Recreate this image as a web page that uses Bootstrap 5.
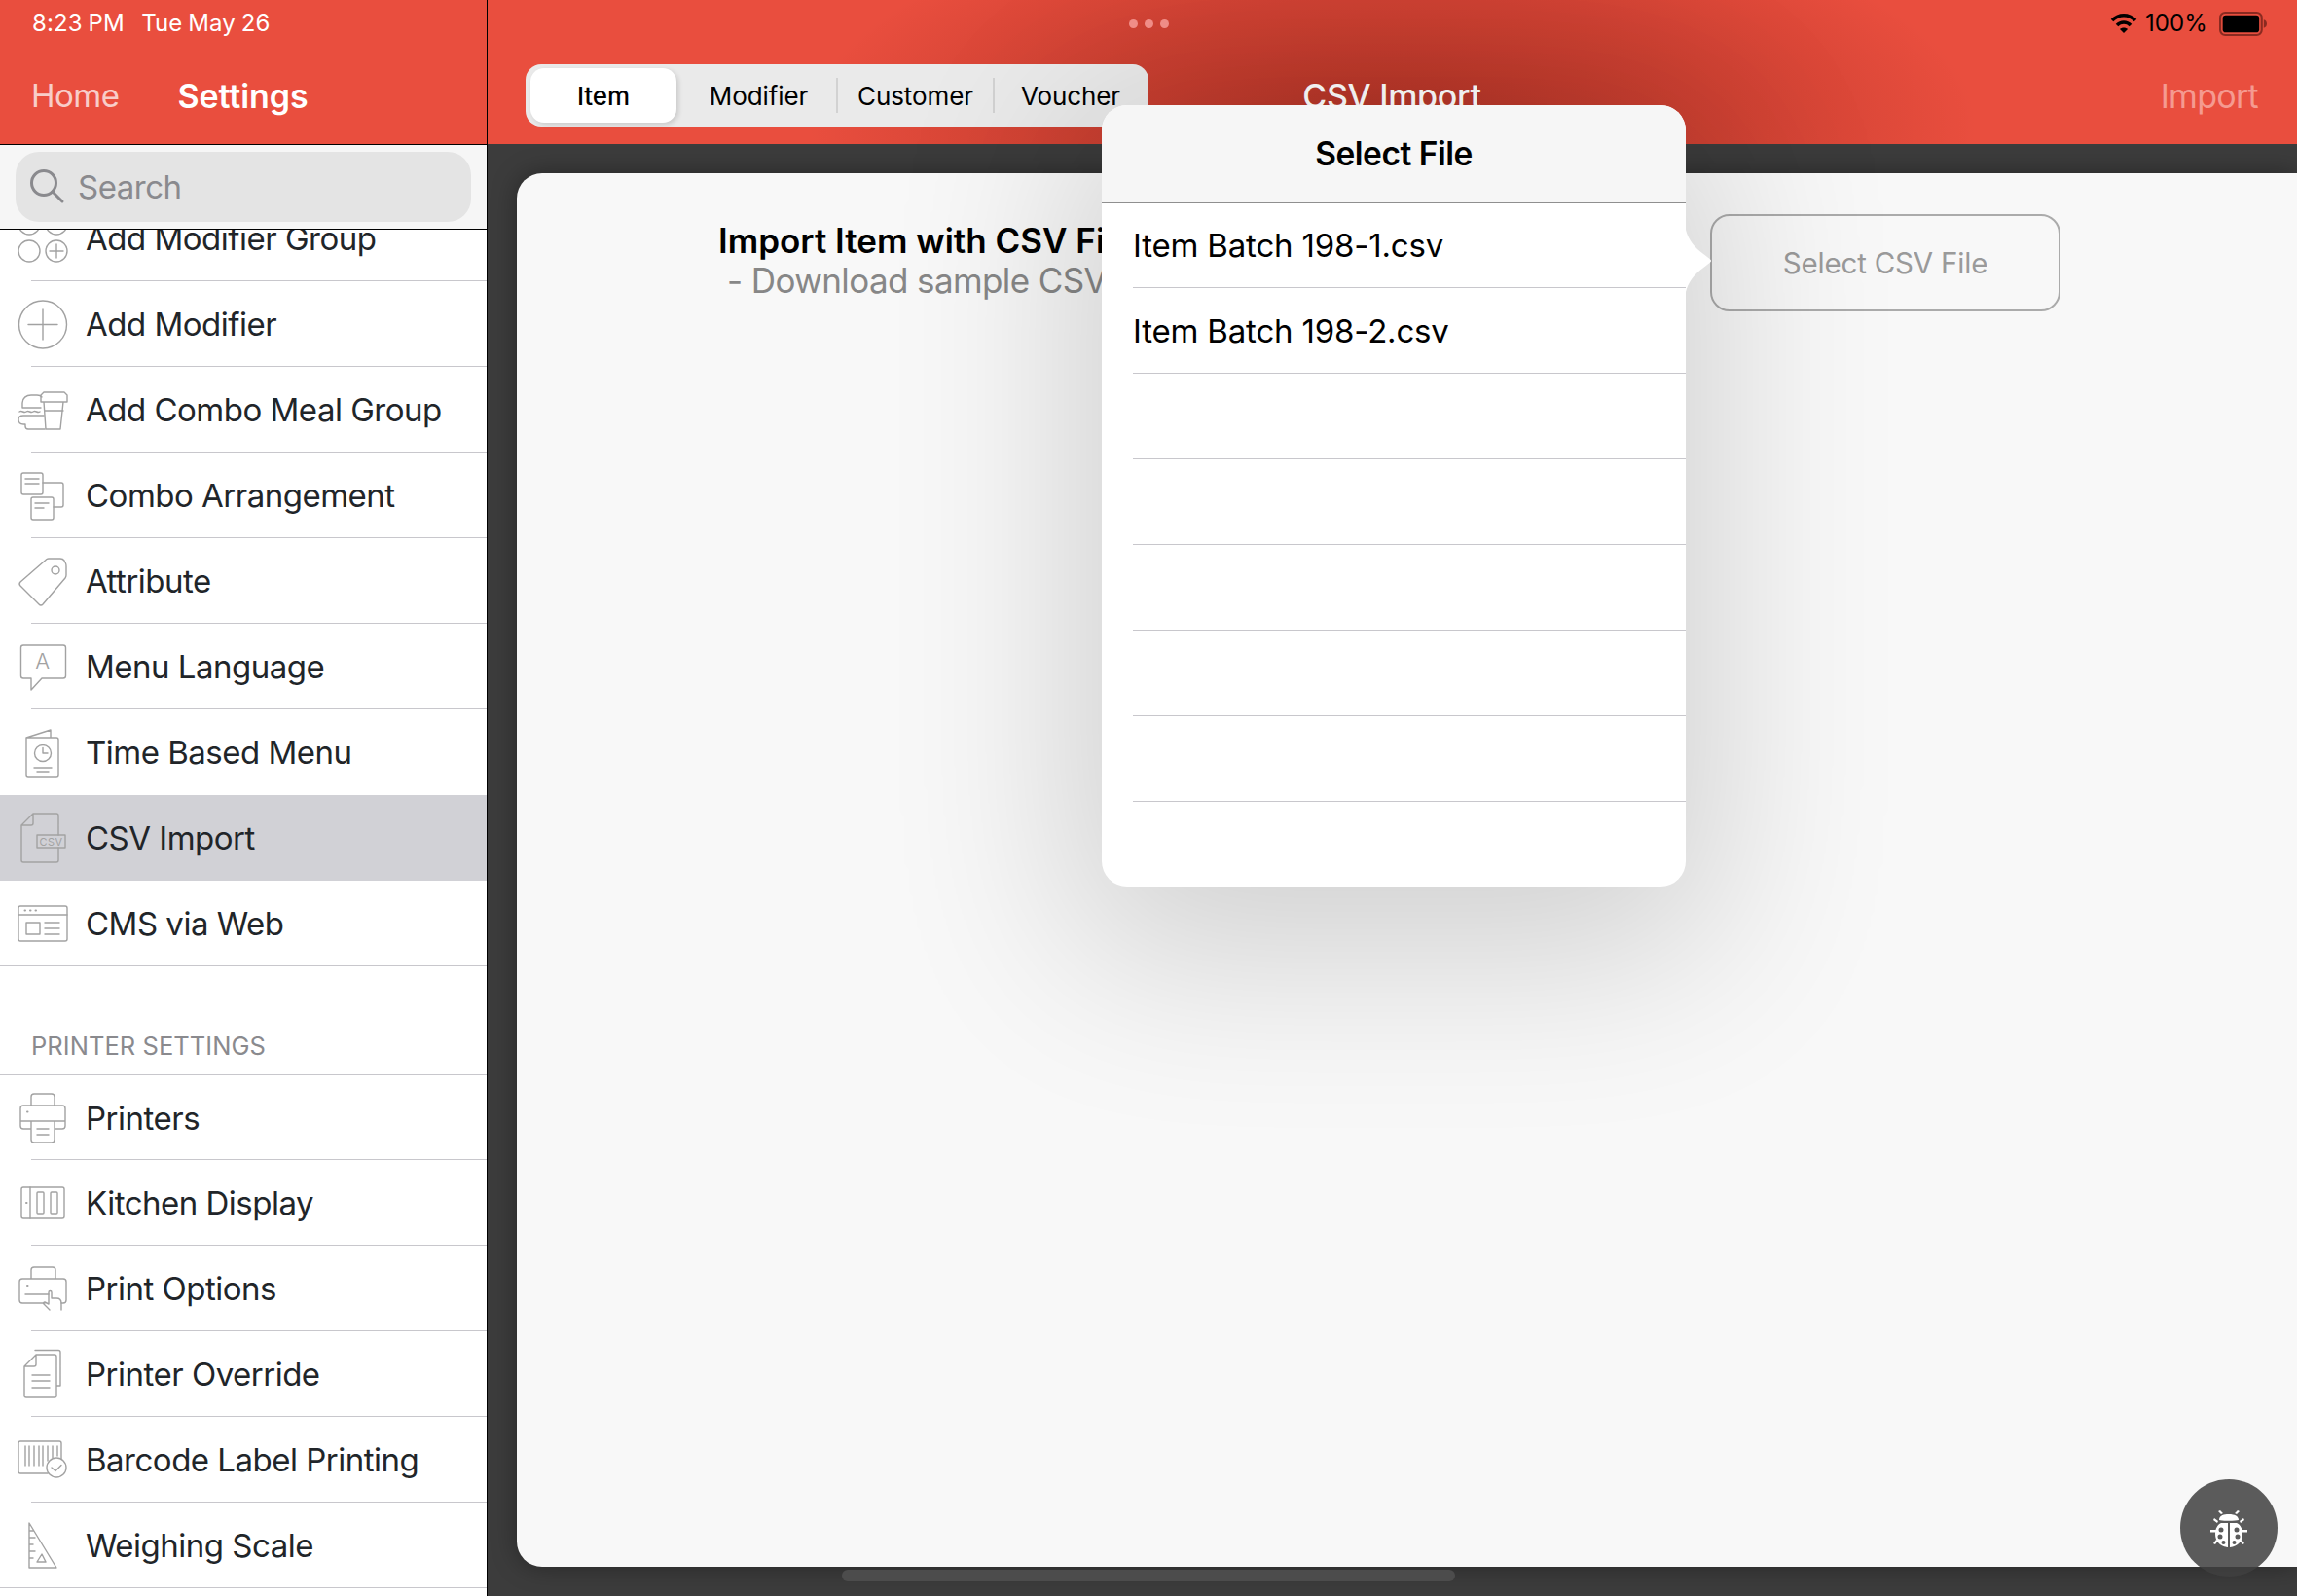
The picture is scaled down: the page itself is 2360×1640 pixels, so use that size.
<!DOCTYPE html>
<html lang="en">
<head>
  <meta charset="UTF-8" />
  <meta name="viewport" content="width=device-width, initial-scale=1" />
  <title>CSV Import</title>
  <link rel="stylesheet" href="https://cdn.jsdelivr.net/npm/bootstrap@5.3.0/dist/css/bootstrap.min.css" />
  <style>
    html, body { width: 2360px; height: 1640px; overflow: hidden; }
    body { font-family: Inter, "Liberation Sans", sans-serif; font-size: 33px; color: #000; background: #3c3c3c; letter-spacing: -.5px; }
    .app-shell { width: 2360px; height: 1640px; }

    /* left column */
    .side-col { width: 501px; height: 1640px; background: #fff; border-right: 1px solid #000; flex: none; }
    .red-bar { background: #e94e3e; height: 149px; border-bottom: 1px solid #000; flex: none; }
    .status-row { height: 48px; font-size: 24px; letter-spacing: .1px; word-spacing: -1px; }
    .side-tabs { height: 100px; padding: 2px 0 0 32px; gap: 60px; color: #fff; font-size: 33px; letter-spacing: -.5px; }
    .tab-off { opacity: .72; }
    .tab-on { font-weight: 600; font-size: 34px; letter-spacing: -.1px; padding-bottom: 2px; }
    .search-wrap { height: 87px; background: #f6f6f6; border-bottom: 1px solid #000; padding: 7px 16px; flex: none; }
    .search-field { height: 72px; background: #e4e4e4; border-radius: 24px; padding-left: 14px; gap: 12px; color: #8a8a8e; font-size: 33px; }
    .search-field span { padding-top: 2px; }
    .set-scroll { overflow: hidden; flex: 1 1 auto; }
    .set-list { margin-top: -35px; }
    .set-row { height: 88px; padding: 0 0 0 16px; gap: 16px; border: 0; border-radius: 0 !important; background: transparent; position: relative; white-space: nowrap; }
    .set-row span { padding-top: 2px; }
    .set-row::after { content: ""; position: absolute; left: 32px; right: 0; bottom: 0; height: 1px; background: #c8c7cc; }
    .set-row.row-full::after { left: 0; }
    .set-row.row-nosep::after { display: none; }
    .set-row.row-sel { background: #d1d1d6; }
    .set-row.row-sel::after { display: none; }
    .set-row svg { flex: none; }
    .set-head { height: 112px; border-bottom: 1px solid #c8c7cc; padding: 0 0 10px 32px; font-size: 25.5px; color: #8a8a8e; letter-spacing: .05px; }
    .set-head + .set-row { height: 87px; }
    .ico { fill: none; stroke: #a2a2a2; stroke-width: 1.4; stroke-linecap: round; stroke-linejoin: round; }
    .ico text { fill: #a2a2a2; stroke: none; font-family: Inter, "Liberation Sans", sans-serif; letter-spacing: .5px; }

    /* right column */
    .main-col { width: 1859px; height: 1640px; position: relative; }
    .main-bar { background-color: #e94e3e; background-image: radial-gradient(ellipse 600px 230px at 930px 128px, rgba(90,10,0,.4), rgba(90,10,0,.2) 55%, rgba(90,10,0,0) 100%); height: 148px; flex: none; }
    .top-status { height: 48px; padding: 0 30px 0 659px; font-size: 24px; letter-spacing: .1px; }
    .dots3 { gap: 7px; }
    .dots3 i { width: 9px; height: 9px; border-radius: 50%; background: #f4908a; display: block; }
    .top-nav { height: 100px; display: grid; grid-template-columns: 1fr auto 1fr; padding: 0 40px 0 39px; align-items: center; color: #fff; font-size: 34px; letter-spacing: -.3px; }
    .seg-ctl { width: 640px; height: 64px; background: #eaeaea; border-radius: 16px; padding: 4px 5px; font-size: 26px; color: #000; letter-spacing: -.1px; }
    .seg-on { width: 150px; margin-right: 5px; background: #fff; border-radius: 14px; font-weight: 500; box-shadow: 2px 2px 5px rgba(0,0,0,.14); }
    .seg-cell { width: 159px; }
    .seg-last { padding-left: 3px; }
    .seg-sep { border-left: 2px solid #d2d2d2; height: 36px; }
    .nav-title { font-weight: 500; }
    .nav-act { color: #f59a90; letter-spacing: -.7px; }
    .dark-area { flex: 1 1 auto; padding: 30px 0 30px 30px; }
    .work-card { height: 100%; background: #f8f8f8; border-radius: 26px 0 0 26px; padding: 42px 0 0 207px; box-shadow: 0 0 26px rgba(0,0,0,.35); }
    .import-txt { width: 1019px; padding-top: 7px; line-height: 41px; font-size: 35px; white-space: nowrap; letter-spacing: 0; }
    .import-txt b { font-weight: 600; display: block; }
    .import-txt span { color: #878787; display: block; padding-left: 9px; letter-spacing: -.6px; }
    .pick-btn { width: 360px; height: 100px; background: transparent; border: 2px solid #ababab; border-radius: 20px; color: #9a9a9a; font-size: 29.5px; letter-spacing: -.2px; }

    /* popover */
    .pop-over { position: absolute; left: 631px; top: 108px; width: 600px; height: 803px; background: #fff; border-radius: 26px; box-shadow: 0 40px 190px 30px rgba(0,0,0,.16); z-index: 5; }
    .pop-head { height: 101px; background: #f6f6f6; border-radius: 26px 26px 0 0; border-bottom: 1px solid #8f8f8f; font-weight: 600; font-size: 33.5px; flex: none; }
    .pop-row { height: 88px; margin-left: 32px; border-bottom: 1px solid #c8c7cc; font-size: 33px; letter-spacing: -.18px; flex: none; }
    .pop-row span { padding-top: 2px; }
    .pop-head + .pop-row { height: 87px; }
    .pop-row:last-child { border-bottom: 0; }
    .pop-tip { position: absolute; left: 600px; top: 128px; }
    .bug-btn { position: absolute; right: 20px; bottom: 20px; width: 100px; height: 100px; border-radius: 50%; background: rgba(64,64,64,.85); }
    .home-ind { position: absolute; left: 364px; bottom: 15px; width: 630px; height: 12px; border-radius: 6px; background: #4c4c4c; }
  </style>
</head>
<body>
  <div class="app-shell d-flex">

    <!-- Settings sidebar -->
    <div class="side-col d-flex flex-column">
      <div class="red-bar text-white">
        <div class="status-row d-flex align-items-center" style="padding-left:33px">8:23 PM &nbsp; Tue May 26</div>
        <div class="side-tabs d-flex align-items-center">
          <span class="tab-off">Home</span>
          <span class="tab-on">Settings</span>
        </div>
      </div>
      <div class="search-wrap">
        <div class="search-field d-flex align-items-center">
          <svg width="38" height="38" viewBox="0 0 38 38" fill="none" stroke="#8a8a8e" stroke-width="3" stroke-linecap="round"><circle cx="15" cy="15" r="12.5"/><path d="M24 24l10 10"/></svg>
          <span>Search</span>
        </div>
      </div>
      <div class="set-scroll">
        <div class="list-group list-group-flush set-list">
          <div class="list-group-item set-row d-flex align-items-center">
            <svg class="ico" width="56" height="56" viewBox="0 0 56 56"><circle cx="14" cy="13" r="11"/><circle cx="42" cy="13" r="11"/><circle cx="14" cy="41" r="11"/><circle cx="42" cy="41" r="11"/><path d="M42 34v14M35 41h14"/></svg>
            <span>Add Modifier Group</span>
          </div>
          <div class="list-group-item set-row d-flex align-items-center">
            <svg class="ico" width="56" height="56" viewBox="0 0 56 56"><circle cx="28" cy="28.5" r="24.5"/><path d="M28 13v31M13 28.5h30"/></svg>
            <span>Add Modifier</span>
          </div>
          <div class="list-group-item set-row d-flex align-items-center">
            <svg class="ico" width="56" height="56" viewBox="0 0 56 56"><path d="M30 10h20l3 3v7H26v-7l3-3zM29 20l2 28h15l3-28M30 29h19"/><path d="M26 26H7v-5c0-5 4-8 9-8h6c2 0 4 .5 5 2M4 30c3-2 4 2 7 0s4 2 7 0 4 2 7 0M29 34H8c-3 0-5 1-5 4s2 5 5 5h2v2c0 2 1 3 3 3h17"/></svg>
            <span>Add Combo Meal Group</span>
          </div>
          <div class="list-group-item set-row d-flex align-items-center">
            <svg class="ico" width="56" height="56" viewBox="0 0 56 56"><rect x="6" y="5" width="22" height="22" rx="2"/><path d="M10 11h14M10 16h14M28 15h19c1 0 2 1 2 2v21c0 1-1 2-2 2h-8"/><rect x="16" y="30" width="23" height="23" rx="2"/><path d="M20 36h14M20 41h9"/></svg>
            <span>Combo Arrangement</span>
          </div>
          <div class="list-group-item set-row d-flex align-items-center">
            <svg class="ico" width="56" height="56" viewBox="0 0 56 56"><path d="M5 29L32 5.500c.7-.5 1.300-.5 2-.5h12c2 0 3 .5 4 2l1.500 3c.5 1 .5 2 .5 3v9c0 1-.3 2-1 3L28 52c-1.200 1.300-2.800 1.300-4 0L5 33c-1.200-1.300-1.200-2.800 0-4z"/><circle cx="41" cy="17" r="4"/></svg>
            <span>Attribute</span>
          </div>
          <div class="list-group-item set-row d-flex align-items-center">
            <svg class="ico" width="56" height="56" viewBox="0 0 56 56"><path d="M8 6h41c1.500 0 2.500 1 2.500 2.500v29c0 1.500-1 2.500-2.500 2.500H27L16 52V40H8c-1.500 0-2.500-1-2.500-2.500v-29C5.500 7 6.500 6 8 6z"/><text x="28" y="30" font-size="22" font-weight="300" text-anchor="middle">A</text></svg>
            <span>Menu Language</span>
          </div>
          <div class="list-group-item set-row row-nosep d-flex align-items-center">
            <svg class="ico" width="56" height="56" viewBox="0 0 56 56"><path d="M11 13L36 5v8M11 13h31c1 0 2 1 2 2v36c0 1-1 2-2 2H13c-1 0-2-1-2-2z"/><circle cx="28" cy="29" r="8.500"/><path d="M28 23.500V29h5M19 44h18M22 48h12"/></svg>
            <span>Time Based Menu</span>
          </div>
          <div class="list-group-item set-row row-sel d-flex align-items-center">
            <svg class="ico" width="56" height="56" viewBox="0 0 56 56"><path d="M18 3h24c1 0 2 1 2 2v20M44 38v13c0 1-1 2-2 2H8c-1 0-2-1-2-2V15L18 3M6 15h10c1 0 2-1 2-2V3"/><rect x="22" y="25" width="29" height="13"/><text x="36.500" y="35.500" font-size="11" text-anchor="middle">CSV</text></svg>
            <span>CSV Import</span>
          </div>
          <div class="list-group-item set-row row-full d-flex align-items-center">
            <svg class="ico" width="56" height="56" viewBox="0 0 56 56"><rect x="3" y="10" width="50" height="36" rx="2"/><path d="M3 19h50M30 27h15M30 33h15M30 39h15"/><rect x="11" y="27" width="14" height="12"/><path d="M9.500 14.500h.5M15 14.500h.5M20.500 14.500h.5" stroke-width="2"/></svg>
            <span>CMS via Web</span>
          </div>
          <div class="set-head d-flex align-items-end">PRINTER SETTINGS</div>
          <div class="list-group-item set-row d-flex align-items-center">
            <svg class="ico" width="56" height="56" viewBox="0 0 56 56"><path d="M16 15V6c0-2 1-3 3-3h18c2 0 3 1 3 3v9M16 39H8c-2 0-3-1-3-3V18c0-2 1-3 3-3h40c2 0 3 1 3 3v18c0 2-1 3-3 3h-8M5 31h46M16 31v19c0 2 1 3 3 3h18c2 0 3-1 3-3V31M22 39h12M22 45h12"/><path d="M12 21.500h.5" stroke-width="2"/></svg>
            <span>Printers</span>
          </div>
          <div class="list-group-item set-row d-flex align-items-center">
            <svg class="ico" width="56" height="56" viewBox="0 0 56 56"><rect x="6" y="12" width="44" height="32" rx="2"/><path d="M15 12v32"/><rect x="22" y="17" width="7" height="22" rx="1"/><rect x="36" y="17" width="7" height="22" rx="1"/><path d="M11 28h.5" stroke-width="2"/></svg>
            <span>Kitchen Display</span>
          </div>
          <div class="list-group-item set-row d-flex align-items-center">
            <svg class="ico" width="56" height="56" viewBox="0 0 56 56"><path d="M16 18V9c0-2 1-3 3-3h19c2 0 3 1 3 3v9M30 43H7c-2 0-3-1-3-3V21c0-2 1-3 3-3h42c2 0 3 1 3 3v19c0 2-1 3-3 3h-2M10 34h24"/><path d="M12 25h.5" stroke-width="2"/><path d="M35 50l-6-6c-1-1 0-2 1-2l4 2v-12c0-2 3-2 3 0v6h5c3 0 5 2 5 5v7"/></svg>
            <span>Print Options</span>
          </div>
          <div class="list-group-item set-row d-flex align-items-center">
            <svg class="ico" width="56" height="56" viewBox="0 0 56 56"><path d="M21 8h19c1 0 2 1 2 2v40c0 1-1 2-2 2H11c-1 0-2-1-2-2V20zM9 20h10c1 0 2-1 2-2V8M20 3.500h24c1 0 2 1 2 2V40h-4M17 29h18M17 35h18M17 42h18"/></svg>
            <span>Printer Override</span>
          </div>
          <div class="list-group-item set-row d-flex align-items-center">
            <svg class="ico" width="56" height="56" viewBox="0 0 56 56"><path d="M33 42H5c-1 0-2-1-2-2V11c0-1 1-2 2-2h40c1 0 2 1 2 2v16"/><path d="M10 14v20M14 14v20M19 14v20M24 14v20M28 14v20M33 14v15M38 14v12M43 14v10"/><circle cx="42" cy="36" r="10"/><path d="M37 36l4 3.500 6-6"/></svg>
            <span>Barcode Label Printing</span>
          </div>
          <div class="list-group-item set-row row-full d-flex align-items-center">
            <svg class="ico" width="56" height="56" viewBox="0 0 56 56"><path d="M14 5l28 46H14zM14 13h4M14 20h6M14 27h4M14 34h6M14 41h4M22 45l5-8 4 8z"/></svg>
            <span>Weighing Scale</span>
          </div>
        </div>
      </div>
    </div>

    <!-- Import screen -->
    <div class="main-col d-flex flex-column">
      <div class="main-bar">
        <div class="top-status d-flex align-items-center justify-content-between">
          <div class="dots3 d-flex"><i></i><i></i><i></i></div>
          <div class="d-flex align-items-center gap-2">
            <svg width="28" height="22" viewBox="0 0 28 22" fill="none" stroke="#000" stroke-width="3.600"><path d="M2 8c7-7 17-7 24 0"/><path d="M7 13c4-4 10-4 14 0"/><path d="M14 21l-4-4c2-2 6-2 8 0z" fill="#000" stroke="none"/></svg>
            <span>100%</span>
            <svg class="ms-1" width="50" height="25" viewBox="0 0 48 24"><rect x="1" y="1" width="41" height="22" rx="5" fill="none" stroke="#8a2a20" stroke-width="2"/><rect x="3.500" y="3.500" width="36" height="17" rx="3" fill="#000"/><path d="M44 8c2 .5 3 2 3 4s-1 3.500-3 4z" fill="#8a2a20"/></svg>
          </div>
        </div>
        <div class="top-nav">
          <div class="seg-ctl d-flex align-items-center text-center">
            <div class="seg-on d-flex align-items-center justify-content-center h-100">Item</div>
            <div class="seg-cell">Modifier</div>
            <div class="seg-sep"></div>
            <div class="seg-cell">Customer</div>
            <div class="seg-sep"></div>
            <div class="flex-fill seg-last">Voucher</div>
          </div>
          <div class="nav-title text-center">CSV Import</div>
          <div class="nav-act text-end">Import</div>
        </div>
      </div>

      <div class="dark-area d-flex flex-column">
        <div class="work-card d-flex align-items-start">
          <div class="import-txt">
            <b>Import Item with CSV File</b>
            <span>- Download sample CSV file</span>
          </div>
          <button type="button" class="btn pick-btn">Select CSV File</button>
        </div>
      </div>

      <!-- Select file popover -->
      <div class="pop-over d-flex flex-column">
        <svg class="pop-tip" width="26" height="64" viewBox="0 0 26 64"><path d="M0 0c2 8 6 14 12 20 4 4 14 10 14 12s-10 8-14 12C6 50 2 56 0 64z" fill="#fff"/></svg>
        <div class="pop-head d-flex align-items-center justify-content-center">Select File</div>
        <div class="pop-row d-flex align-items-center"><span>Item Batch 198-1.csv</span></div>
        <div class="pop-row d-flex align-items-center"><span>Item Batch 198-2.csv</span></div>
        <div class="pop-row"></div>
        <div class="pop-row"></div>
        <div class="pop-row"></div>
        <div class="pop-row"></div>
        <div class="pop-row"></div>
        <div class="pop-row"></div>
      </div>

      <div class="home-ind"></div>
      <div class="bug-btn d-flex align-items-center justify-content-center">
        <svg width="44" height="44" viewBox="0 0 44 44" fill="#fff"><path d="M12 14c0-4 4-6 10-6s10 2 10 6c-3 1-17 1-20 0zM14 8l-3-3 2-1 3 3zM30 8l3-3-2-1-3 3zM7 12l4 3-1 2-4-3zM37 12l-4 3 1 2 4-3zM3 24h6v2.500H3zM35 24h6v2.500h-6zM9 34l-3 4 2 1 3-4zM35 34l3 4-2 1-3-4z"/><path fill-rule="evenodd" d="M21 17v25c-8-1-13-6-13-14 0-5 2-9 6-11zM11.500 24a2.500 2.500 0 1 0 5 0 2.500 2.500 0 1 0-5 0zM10.500 31a2.500 2.500 0 1 0 5 0 2.500 2.500 0 1 0-5 0zM14.500 37a2 2 0 1 0 4 0 2 2 0 1 0-4 0z"/><path fill-rule="evenodd" d="M23 17v25c8-1 13-6 13-14 0-5-2-9-6-11zM27.500 24a2.500 2.500 0 1 0 5 0 2.500 2.500 0 1 0-5 0zM28.500 31a2.500 2.500 0 1 0 5 0 2.500 2.500 0 1 0-5 0zM25.500 37a2 2 0 1 0 4 0 2 2 0 1 0-4 0z"/></svg>
      </div>
    </div>
  </div>
  <script src="https://cdn.jsdelivr.net/npm/bootstrap@5.3.0/dist/js/bootstrap.bundle.min.js"></script>
</body>
</html>
